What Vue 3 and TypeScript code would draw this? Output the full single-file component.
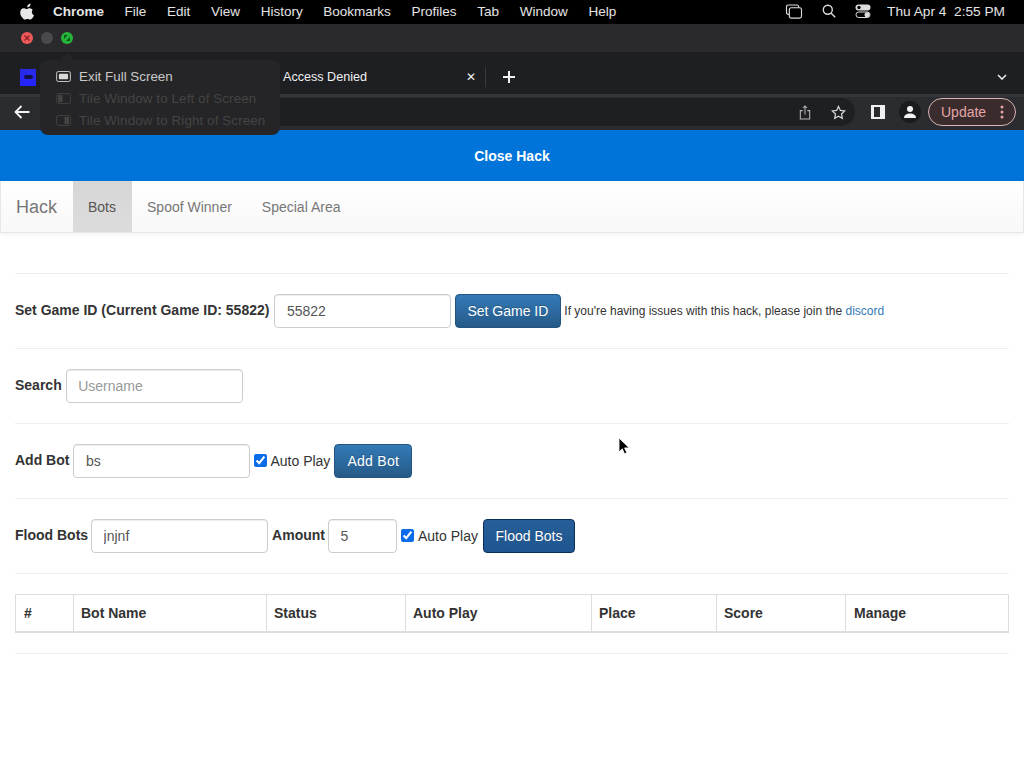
<script setup lang="ts">
const menus: string[] = ['File', 'Edit', 'View', 'History', 'Bookmarks', 'Profiles', 'Tab', 'Window', 'Help']
const columns: { label: string; width: number }[] = [
  { label: '#', width: 58 },
  { label: 'Bot Name', width: 193 },
  { label: 'Status', width: 139 },
  { label: 'Auto Play', width: 186 },
  { label: 'Place', width: 125 },
  { label: 'Score', width: 129 },
  { label: 'Manage', width: 163 }
]
</script>

<template>
  <div class="screen">
    <header class="menubar">
      <svg class="apple" viewBox="0 0 16 18" width="15" height="17" aria-hidden="true">
        <path fill="#e8e8e8" d="M11.2 0.6c0.1 1-0.3 2-0.9 2.7-0.6 0.7-1.6 1.3-2.6 1.2-0.1-1 0.4-2 0.9-2.6 0.6-0.7 1.7-1.3 2.6-1.3zM14.5 6.2c-0.1 0.1-1.9 1.1-1.9 3.3 0 2.6 2.3 3.5 2.3 3.5 0 0.1-0.4 1.3-1.2 2.5-0.7 1.1-1.5 2.1-2.7 2.1-1.2 0-1.5-0.7-2.9-0.7-1.4 0-1.8 0.7-2.9 0.7-1.1 0-1.9-1-2.7-2.2C0.9 14 0.2 12 0.2 10.100c0-3.100 2-4.700 3.900-4.700 1.100 0 2.100 0.800 2.800 0.800 0.700 0 1.800-0.800 3.100-0.800 0.500 0 2.300 0 3.500 1.800z" />
      </svg>
      <strong class="app-name">Chrome</strong>
      <span v-for="menu in menus" :key="menu" class="menu-item">{{ menu }}</span>
      <div class="status">
        <svg viewBox="0 0 18 16" width="18" height="15" fill="none" stroke="#ddd" stroke-width="1.2" aria-hidden="true">
          <rect x="1" y="1" width="13" height="10" rx="2" />
          <rect x="4" y="4" width="13" height="11" rx="2" fill="#000" />
        </svg>
        <svg class="search" viewBox="0 0 14 14" width="14" height="14" fill="none" stroke="#ddd" stroke-width="1.4" aria-hidden="true">
          <circle cx="5.800" cy="5.800" r="4.500" />
          <path d="M9.200 9.200l4 4" />
        </svg>
        <svg class="control" viewBox="0 0 16 14" width="16" height="14" aria-hidden="true">
          <rect x="0.500" y="0.500" width="15" height="6" rx="3" fill="#ddd" />
          <circle cx="4" cy="3.500" r="1.700" fill="#000" />
          <rect x="1" y="8" width="14" height="5.500" rx="2.750" fill="none" stroke="#ddd" />
          <circle cx="12" cy="10.750" r="2.500" fill="#ddd" />
        </svg>
        <span class="clock">Thu Apr 4&nbsp; 2:55 PM</span>
      </div>
    </header>

    <div class="titlebar">
      <span class="light red">
        <svg viewBox="0 0 12 12" width="12" height="12" aria-hidden="true">
          <path d="M3.500 3.500l5 5M8.500 3.500l-5 5" stroke="#8c1d20" stroke-width="1.300" />
        </svg>
      </span>
      <span class="light grey"></span>
      <span class="light green">
        <svg viewBox="0 0 12 12" width="12" height="12" aria-hidden="true">
          <path d="M3 3h4L3 7zM9 9H5l4-4z" fill="#0b5c18" />
        </svg>
      </span>
    </div>

    <div class="tabstrip">
      <span class="favicon"><i></i></span>
      <span class="tab-title">Access Denied</span>
      <span class="tab-close">✕</span>
      <span class="tab-sep"></span>
      <svg class="tab-new" viewBox="0 0 12 12" width="12" height="12" aria-hidden="true">
        <path d="M6 0v12M0 6h12" stroke="#f2f2f2" stroke-width="2" />
      </svg>
      <svg class="tab-list" viewBox="0 0 10 6" width="10" height="6" fill="none" stroke="#e8e8e8" stroke-width="1.600" aria-hidden="true">
        <path d="M1 1l4 4 4-4" />
      </svg>
    </div>

    <div class="toolbar">
      <svg class="back" viewBox="0 0 16 14" width="16" height="14" fill="none" stroke="#f4f4f4" stroke-width="1.800" aria-hidden="true">
        <path d="M15.500 7H2M7.500 1L1.500 7l6 6" />
      </svg>
      <div class="omnibox">
        <svg viewBox="0 0 12 16" width="12" height="15" fill="none" stroke="#b8b8b8" stroke-width="1.100" aria-hidden="true">
          <path d="M3.500 6H1v9h10V6H8.500M6 10V1M3.800 3.200L6 1l2.200 2.200" />
        </svg>
        <svg class="star" viewBox="0 0 16 16" width="15" height="15" fill="none" stroke="#d8d8d8" stroke-width="1.300" aria-hidden="true">
          <path d="M8 1.500l2 4.300 4.600 0.600-3.400 3.200 0.900 4.600L8 11.900l-4.100 2.300 0.900-4.600L1.400 6.400 6 5.800z" />
        </svg>
      </div>
      <span class="sidepanel"><i></i></span>
      <span class="avatar">
        <svg viewBox="0 0 14 14" width="14" height="14" fill="#f2f2f2" aria-hidden="true">
          <circle cx="7" cy="4" r="3" />
          <path d="M1 13c0-3 2.500-4.500 6-4.500s6 1.500 6 4.500z" />
        </svg>
      </span>
      <div class="update">
        <span>Update</span>
        <svg viewBox="0 0 4 14" width="4" height="14" fill="#e3a5a5" aria-hidden="true">
          <circle cx="2" cy="2" r="1.500" />
          <circle cx="2" cy="7" r="1.500" />
          <circle cx="2" cy="12" r="1.500" />
        </svg>
      </div>
    </div>

    <main class="page">
      <div class="close-bar">Close Hack</div>
      <nav class="navbar">
        <span class="brand">Hack</span>
        <span class="nav-link active">Bots</span>
        <span class="nav-link">Spoof Winner</span>
        <span class="nav-link">Special Area</span>
      </nav>

      <div class="content">
        <hr />
        <div class="form-row">
          <label class="label-wide">Set Game ID (Current Game ID: 55822)</label>
          <input class="field" type="text" value="55822" />
          <button class="btn btn-set" type="button">Set Game ID</button>
          <span class="note">If you're having issues with this hack, please join the <a class="link">discord</a></span>
        </div>
        <hr />
        <div class="form-row">
          <label>Search</label>
          <input class="field" type="text" placeholder="Username" />
        </div>
        <hr />
        <div class="form-row">
          <label>Add Bot</label>
          <input class="field" type="text" value="bs" />
          <span class="check"><input type="checkbox" checked /><span>Auto Play</span></span>
          <button class="btn btn-add" type="button">Add Bot</button>
        </div>
        <hr />
        <div class="form-row">
          <label class="label-tight">Flood Bots</label>
          <input class="field" type="text" value="jnjnf" />
          <label class="label-tight">Amount</label>
          <input class="field amount" type="text" value="5" />
          <span class="check check-wide"><input type="checkbox" checked /><span>Auto Play</span></span>
          <button class="btn focused" type="button">Flood Bots</button>
        </div>
        <hr />
        <table class="bots">
          <thead>
            <tr>
              <th v-for="col in columns" :key="col.label" :style="{ width: col.width + 'px' }">{{ col.label }}</th>
            </tr>
          </thead>
        </table>
        <hr />
      </div>

      <svg class="cursor" viewBox="0 0 12 18" width="12" height="18" aria-hidden="true">
        <path d="M1 1v14l3.300-3.200 2.200 5 2.300-1-2.200-4.900h4.600z" fill="#000" stroke="#fff" stroke-width="0.800" />
      </svg>
    </main>

    <aside class="popover">
      <div class="pop-item">
        <svg viewBox="0 0 16 12" width="15" height="11" aria-hidden="true">
          <rect x="0.500" y="0.500" width="15" height="11" rx="2" fill="none" stroke="#d8d8d8" />
          <rect x="3" y="3" width="10" height="6" rx="1" fill="#d8d8d8" />
        </svg>
        <span>Exit Full Screen</span>
      </div>
      <div class="pop-item off">
        <svg viewBox="0 0 16 12" width="15" height="11" aria-hidden="true">
          <rect x="0.500" y="0.500" width="15" height="11" rx="2" fill="none" stroke="#444" />
          <rect x="2" y="2" width="5" height="8" fill="#444" />
        </svg>
        <span>Tile Window to Left of Screen</span>
      </div>
      <div class="pop-item off">
        <svg viewBox="0 0 16 12" width="15" height="11" aria-hidden="true">
          <rect x="0.500" y="0.500" width="15" height="11" rx="2" fill="none" stroke="#444" />
          <rect x="9" y="2" width="5" height="8" fill="#444" />
        </svg>
        <span>Tile Window to Right of Screen</span>
      </div>
    </aside>
  </div>
</template>

<style>
html, body { margin: 0; background: #fff; }
</style>

<style scoped>
.screen {
  position: relative;
  width: 1024px;
  height: 768px;
  overflow: hidden;
  display: flex;
  flex-direction: column;
  font-family: "Liberation Sans", Arial, sans-serif;
  font-size: 14px;
  color: #333;
}
.menubar {
  height: 24px;
  flex: none;
  display: flex;
  align-items: center;
  background: #000;
  color: #e4e4e4;
  font-size: 13.5px;
  padding: 0 19px 2px 20px;
  box-sizing: border-box;
}
.apple { margin-right: 18px; }
.app-name { margin-right: 20.500px; font-weight: 700; }
.menu-item { margin-right: 20.700px; }
.status { margin-left: auto; display: flex; align-items: center; font-size: 13.700px; }
.search { margin-left: 19px; }
.control { margin-left: 19px; }
.clock { margin-left: 16px; }
.titlebar {
  height: 28px;
  flex: none;
  background: #2a2a2c;
  display: flex;
  align-items: center;
  padding: 0 0 0 21px;
  gap: 8px;
}
.light { width: 12px; height: 12px; border-radius: 50%; display: block; }
.light svg { display: block; }
.red { background: #ee5a5c; }
.grey { background: #4a4a4c; }
.green { background: #27b43a; }
.tabstrip {
  height: 45px;
  flex: none;
  box-sizing: border-box;
  background: #1e1f22;
  display: flex;
  align-items: center;
  padding: 8px 0 0 20px;
  color: #f0f0f0;
  border-bottom: 3px solid #35363a;
}
.favicon {
  width: 16px;
  height: 17px;
  background: linear-gradient(to bottom, #2a2ae8, #2323ff);
  display: flex;
  align-items: center;
  justify-content: center;
}
.favicon i { width: 9px; height: 4px; border-radius: 2px; background: #12124a; }
.tab-title { margin-left: 247px; font-size: 12.600px; width: 184px; }
.tab-close { font-size: 12px; width: 19px; margin-left: -1px; color: #f0f0f0; }
.tab-sep { width: 1px; height: 20px; background: #3a3a3d; }
.tab-new { margin-left: 17px; }
.tab-list { margin-left: auto; margin-right: 17px; }
.toolbar {
  height: 33px;
  flex: none;
  box-sizing: border-box;
  background: #2b2c30;
  display: flex;
  align-items: center;
  padding: 0 8px 3px 14px;
}
.back { flex: none; }
.omnibox {
  flex: 1;
  height: 28px;
  margin-left: 22px;
  border-radius: 14px;
  background: #1e1f22;
  display: flex;
  align-items: center;
  justify-content: flex-end;
  padding-right: 9px;
  gap: 20px;
}
.sidepanel {
  width: 14px;
  height: 14px;
  box-sizing: border-box;
  margin-left: 16px;
  background: #f0f0f0;
  display: block;
  padding: 2px 0 2px 3px;
}
.sidepanel i { display: block; width: 6px; height: 10px; background: #2b2c30; }
.avatar {
  width: 22px;
  height: 22px;
  margin-left: 14px;
  border-radius: 50%;
  background: #1a1b1e;
  display: flex;
  align-items: center;
  justify-content: center;
}
.update {
  width: 88px;
  height: 28px;
  box-sizing: border-box;
  margin-left: 7px;
  border: 1px solid #d9b5b5;
  border-radius: 14px;
  background: #3a2b2c;
  color: #e3a5a5;
  display: flex;
  align-items: center;
  justify-content: space-between;
  padding: 0 11px 0 12px;
  font-size: 14px;
}
.page {
  position: relative;
  flex: 1;
  background: #fff;
}
.close-bar {
  height: 51px;
  background: #0074d9;
  color: #fff;
  font-weight: 700;
  display: flex;
  align-items: center;
  justify-content: center;
}
.navbar {
  height: 52px;
  box-sizing: border-box;
  display: flex;
  align-items: stretch;
  background: linear-gradient(to bottom, #fff, #f8f8f8);
  border: 1px solid #e7e7e7;
  border-top: 0;
  box-shadow: 0 1px 5px rgba(0, 0, 0, 0.075);
  color: #777;
}
.brand {
  width: 72px;
  box-sizing: border-box;
  padding-left: 15px;
  font-size: 18px;
  line-height: 52px;
}
.nav-link { padding: 0 15px; line-height: 52px; }
.nav-link.active {
  color: #555;
  padding-right: 16px;
  background: linear-gradient(to bottom, #d6d6d6, #dcdcdc);
}
.content { padding: 40px 15px 0; }
hr {
  border: 0;
  border-top: 1px solid #eee;
  margin: 0;
}
.form-row {
  height: 34px;
  margin: 20px 0;
  display: flex;
  align-items: center;
  gap: 4px;
}
label { font-weight: 700; margin-top: -2px; }
.label-wide { margin-right: 1px; }
.label-tight { margin-right: -1px; }
.field {
  width: 177px;
  height: 34px;
  box-sizing: border-box;
  padding: 6px 11.500px;
  border: 1px solid #ccc;
  border-radius: 4px;
  font: 14px "Liberation Sans", Arial, sans-serif;
  color: #555;
  background: #fff;
  box-shadow: inset 0 1px 1px rgba(0, 0, 0, 0.075);
}
.field::placeholder { color: #999; }
.amount { width: 69px; }
.btn {
  height: 34px;
  padding: 6px 12px;
  border: 1px solid #245580;
  border-radius: 4px;
  font: 14px "Liberation Sans", Arial, sans-serif;
  color: #fff;
  background: linear-gradient(to bottom, #337ab7, #265a88);
  text-shadow: 0 -1px 0 rgba(0, 0, 0, 0.2);
}
.btn-set { padding: 6px 12px 6px 11px; }
.btn-add { letter-spacing: 0.300px; }
.btn.focused {
  width: 92px;
  padding: 6px 0;
  margin-left: 1px;
  background: linear-gradient(to bottom, #265f98, #1f5590);
  border-color: #0b2f5c;
}
.note { font-size: 12px; color: #333; margin-left: -1px; }
.link { color: #337ab7; }
.check { display: flex; align-items: center; gap: 3px; }
.check-wide { gap: 4px; }
.check input { width: 13px; height: 13px; margin: 0 0 2px 0; accent-color: #0a6ce8; }
.bots {
  width: 993px;
  margin: 20px 0;
  border-collapse: collapse;
  table-layout: fixed;
  border: 1px solid #ddd;
}
.bots th {
  height: 37px;
  box-sizing: border-box;
  padding: 1px 8px 0 7px;
  text-align: left;
  font-weight: 700;
  border: 1px solid #ddd;
  border-bottom: 2px solid #ddd;
}
.bots th:first-child { width: 57px; padding-left: 8px; }
.bots th:last-child { padding-left: 8px; }
.cursor { position: absolute; left: 618px; top: 307px; }
.popover {
  position: absolute;
  left: 40px;
  top: 60px;
  width: 240px;
  height: 75px;
  box-sizing: border-box;
  padding: 5px 16px;
  border-radius: 8px;
  background: #252527;
  font-size: 13.400px;
}
.popover::before {
  content: "";
  position: absolute;
  left: 20px;
  top: -7px;
  border: 7px solid transparent;
  border-top: 0;
  border-bottom-color: #252527;
}
.pop-item {
  height: 22px;
  display: flex;
  align-items: center;
  gap: 8px;
  color: #c8c8c8;
  white-space: nowrap;
}
.pop-item svg { flex: none; }
.pop-item.off { color: #444; letter-spacing: 0.100px; }
</style>
